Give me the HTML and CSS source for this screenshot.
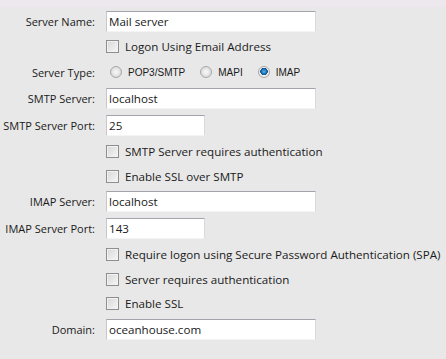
FILE: index.html
```html
<!DOCTYPE html>
<html lang="en">
<head>
    <meta charset="UTF-8">
    <title>Server Settings</title>
    <link rel="stylesheet" href="styles.css">
</head>
<body>
    <div class="top-band"></div>
    <form class="settings">
        <label class="field-label">Server Name:</label>
        <div class="field"><input class="text-input" type="text" value="Mail server"></div>

        <div></div>
        <div class="field"><span class="check"></span><span class="check-text">Logon Using Email Address</span></div>

        <label class="field-label">Server Type:</label>
        <div class="field radios">
            <span class="radio"></span><span class="radio-text">POP3/SMTP</span>
            <span class="radio"></span><span class="radio-text">MAPI</span>
            <span class="radio checked"></span><span class="radio-text">IMAP</span>
        </div>

        <label class="field-label">SMTP Server:</label>
        <div class="field"><input class="text-input" type="text" value="localhost"></div>

        <label class="field-label">SMTP Server Port:</label>
        <div class="field"><input class="text-input short" type="text" value="25"></div>

        <div></div>
        <div class="field"><span class="check"></span><span class="check-text">SMTP Server requires authentication</span></div>

        <div></div>
        <div class="field"><span class="check"></span><span class="check-text">Enable SSL over SMTP</span></div>

        <label class="field-label">IMAP Server:</label>
        <div class="field"><input class="text-input" type="text" value="localhost"></div>

        <label class="field-label">IMAP Server Port:</label>
        <div class="field"><input class="text-input short" type="text" value="143"></div>

        <div></div>
        <div class="field"><span class="check"></span><span class="check-text">Require logon using Secure Password Authentication (SPA)</span></div>

        <div></div>
        <div class="field"><span class="check"></span><span class="check-text">Server requires authentication</span></div>

        <div></div>
        <div class="field"><span class="check"></span><span class="check-text">Enable SSL</span></div>

        <label class="field-label">Domain:</label>
        <div class="field"><input class="text-input" type="text" value="oceanhouse.com"></div>
    </form>
</body>
</html>
```
FILE: styles.css
```css
body {
    margin: 0;
    background: #e8e8e8;
    font-family: "Open Sans", "Noto Sans", sans-serif;
    font-size: 11px;
    color: #1a1a1a;
    height: 359px;
    overflow: hidden;
}
.top-band {
    height: 7px;
    background: #ede8ed;
}
.settings {
    display: grid;
    grid-template-columns: 95px 1fr;
    grid-template-rows: 26px 25px 26px 27px 27px 25px 24px 27px 27px 25px 24px 25px 26px;
    column-gap: 11px;
    margin-top: 1px;
}
.field-label {
    display: flex;
    align-items: center;
    justify-content: flex-end;
}
.field {
    display: flex;
    align-items: center;
}
.text-input {
    box-sizing: border-box;
    width: 210px;
    height: 21px;
    margin: 0;
    padding: 0 3px 0 2px;
    background: #fff;
    border: 1px solid;
    border-color: #a3a3ab #dcd8e2 #f4f4f4 #c6c6ce;
    font-family: inherit;
    font-size: 11.6px;
    color: #1a1a1a;
    outline: none;
}
.text-input.short {
    width: 99px;
}
.check {
    box-sizing: border-box;
    width: 13px;
    height: 13px;
    border: 1px solid #8e8e8e;
    background: linear-gradient(135deg, #d8d8d8, #f6f6f6);
    box-shadow: inset 0 0 0 1px #f2f2f2;
}
.check-text {
    margin-left: 6px;
    font-size: 11.6px;
}
.radios {
    font-family: "Liberation Sans", sans-serif;
    font-size: 10px;
}
.radio {
    box-sizing: border-box;
    width: 12px;
    height: 12px;
    margin-left: 4px;
    border-radius: 50%;
    border: 1px solid #a8a8a8;
    background: radial-gradient(circle at 50% 50%, #fafafa 0, #e0e0e0 60%, #cfcfcf 100%);
}
.radio.checked {
    background: radial-gradient(circle at 50% 45%, #5fb4e8 0, #1a6fb0 2.5px, #0b4f88 3.5px, #f2f2f2 4px, #d8d8d8 100%);
}
.radio-text {
    margin-left: 6px;
    margin-right: 11px;
}
```
